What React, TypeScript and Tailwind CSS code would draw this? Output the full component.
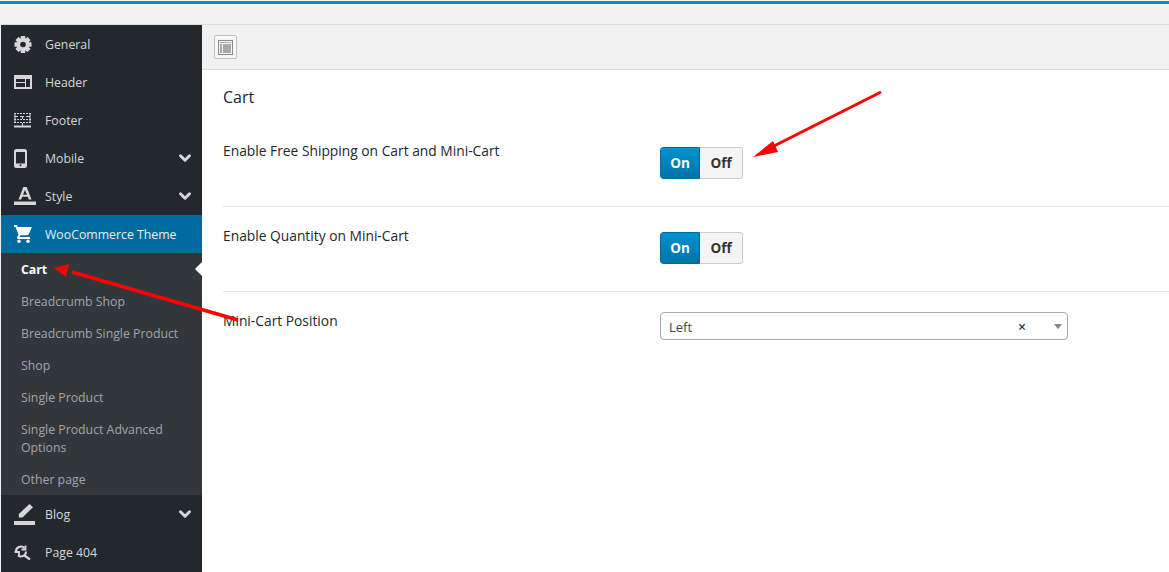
import { ChevronDown } from "lucide-react";

const font = { fontFamily: '"Open Sans", "Noto Sans", sans-serif' };

function Gear() {
  return (
    <svg width="18" height="17" viewBox="0 0 18 17" fill="#d5d7d8">
      <circle cx="9" cy="8.500" r="6.500" />
      {[0, 45, 90, 135].map((a) => (
        <rect key={a} x="6.700" y="0" width="4.600" height="17" rx="0.500" transform={`rotate(${a} 9 8.500)`} />
      ))}
      <circle cx="9" cy="8.500" r="2.800" fill="#23282d" />
    </svg>
  );
}

function HeaderIcon() {
  return (
    <svg width="18" height="14" viewBox="0 0 18 14" fill="#d5d7d8">
      <path fillRule="evenodd" d="M0 0h18v14H0zM2 4v3h9V4zm0 4v4h9V8zm10-4v8h4V4z" />
    </svg>
  );
}

function FooterIcon() {
  return (
    <svg width="17" height="15" viewBox="0 0 17 15" fill="none" stroke="#d5d7d8">
      <path d="M0 .500h17M0 6.500h17M0 9.500h17" strokeDasharray="2 1" />
      <path d="M0 3.500h17" strokeDasharray="4 2" />
      <path d="M1 1v8M8.500 3v3M8.500 10v3M16 1v8" />
      <path d="M0 13.500h17" strokeWidth="2" />
    </svg>
  );
}

function MobileIcon() {
  return (
    <svg width="13" height="19" viewBox="0 0 13 19" fill="#d5d7d8">
      <path fillRule="evenodd" d="M2.500 0h8A2.500 2.500 0 0 1 13 2.500v14a2.500 2.500 0 0 1-2.500 2.500h-8A2.500 2.500 0 0 1 0 16.500v-14A2.500 2.500 0 0 1 2.500 0zM2 3v11.500h9V3zm4.500 12.300a1 1 0 1 0 0 2 1 1 0 0 0 0-2z" />
    </svg>
  );
}

function StyleIcon() {
  return (
    <svg width="22" height="18" viewBox="0 0 22 18" fill="#d5d7d8">
      <path fillRule="evenodd" d="M9.300 0h3.400l4.800 12.500h-2.700l-1-2.700H8.200l-1 2.700H4.500zM11 3 9 7.800h4z" />
      <rect x="0" y="14.500" width="22" height="3.500" />
    </svg>
  );
}

function CartIcon() {
  return (
    <svg width="18" height="18" viewBox="0 0 18 18" fill="#fff">
      <path d="M0 0h3l.9 2H18l-3.300 7.200c-.3.6-.9 1-1.600 1H6.500l-.9 1.500v.3h10.400v2H4.500c-1.100 0-1.800-1.200-1.300-2.100l1.300-2.300L1.500 2H0z" />
      <circle cx="5" cy="16.300" r="1.700" />
      <circle cx="14" cy="16.300" r="1.700" />
    </svg>
  );
}

function BlogIcon() {
  return (
    <svg width="21" height="21" viewBox="0 0 21 21" fill="#d5d7d8">
      <path d="M15.500 0 19 3.200 8.500 13.500H4.800v-3.600z" />
      <rect x="0" y="17" width="21" height="4" />
    </svg>
  );
}

function PageIcon() {
  return (
    <svg width="17" height="15" viewBox="0 0 17 15" fill="none" stroke="#d5d7d8" strokeWidth="2">
      <path d="M2 7a5 5 0 0 1 8.500-4" />
      <path d="M12 6.500a5 5 0 0 1-8 4" />
      <path d="M10.500 10.500l5.500 4" strokeWidth="2.200" />
      <path d="M11.500 .500v4H7.500" strokeWidth="1.800" />
      <path d="M.500 7h4.500v4" strokeWidth="1.800" />
    </svg>
  );
}

function MenuRow({
  icon,
  label,
  chevron,
  active,
}: {
  icon: React.ReactNode;
  label: string;
  chevron?: boolean;
  active?: boolean;
}) {
  return (
    <div className={`flex h-[38px] items-center ${active ? "bg-[#006ba0] text-[#e6eef3]" : "text-[#d5d7d8]"}`}>
      <div className="flex w-[44px] pl-[13px]">{icon}</div>
      <span className="flex-1 pt-[3px] text-[12.3px]">{label}</span>
      {chevron && <ChevronDown size={18} strokeWidth={4} className="mr-[8px] text-[#d5d7d8]" />}
    </div>
  );
}

function SubItem({ label, active }: { label: string; active?: boolean }) {
  return (
    <div className={`relative pb-[6px] pl-[20px] pr-[20px] pt-[8px] text-[12.3px] leading-[18px] ${active ? "font-bold text-white" : "text-[#a0a5a9]"}`}>
      {label}
      {active && (
        <span className="absolute right-0 top-[9px] h-0 w-0 border-y-[7px] border-r-[7px] border-y-transparent border-r-white" />
      )}
    </div>
  );
}

function Toggle() {
  return (
    <div className="flex h-[32px] w-[83px] overflow-hidden rounded-[3px] text-[13.500px] font-bold leading-none">
      <div className="flex w-[40px] items-center justify-center rounded-l-[3px] border border-[#006a9e] bg-gradient-to-b from-[#0091cd] to-[#0073aa] pt-[2px] text-white">
        On
      </div>
      <div className="flex flex-1 items-center justify-center rounded-r-[3px] border border-l-0 border-[#cccccc] bg-[#f5f5f5] pt-[2px] text-[#333333]">
        Off
      </div>
    </div>
  );
}

function Arrows() {
  return (
    <svg className="pointer-events-none absolute left-0 top-0" width="1169" height="572" viewBox="0 0 1169 572">
      <line x1="881" y1="92" x2="770" y2="148" stroke="#ff0000" strokeWidth="3" />
      <polygon points="753,157 773,141 778,152" fill="#ff0000" />
      <line x1="238" y1="320" x2="72" y2="272" stroke="#ff0000" strokeWidth="3.500" />
      <polygon points="54,268 69,264 66,277" fill="#ff0000" />
    </svg>
  );
}

export default function App() {
  return (
    <div className="relative h-[572px] w-[1169px] overflow-hidden bg-white" style={font}>
      <div className="h-[1px] bg-[#f1f1f1]" />
      <div className="h-[3px] bg-[#0091cd]" />
      <div className="h-[1px] bg-white" />
      <div className="h-[20px] border-b border-[#dddddd] bg-[#f1f1f1]" />
      <div className="flex h-[547px]">
        <div className="w-[1px] bg-[#f1f1f1]" />
        <div className="w-[201px] bg-[#23282d]">
          <MenuRow icon={<Gear />} label="General" />
          <MenuRow icon={<HeaderIcon />} label="Header" />
          <MenuRow icon={<FooterIcon />} label="Footer" />
          <MenuRow icon={<MobileIcon />} label="Mobile" chevron />
          <MenuRow icon={<StyleIcon />} label="Style" chevron />
          <MenuRow icon={<CartIcon />} label="WooCommerce Theme" active />
          <div className="bg-[#32373c]">
            <SubItem label="Cart" active />
            <SubItem label="Breadcrumb Shop" />
            <SubItem label="Breadcrumb Single Product" />
            <SubItem label="Shop" />
            <SubItem label="Single Product" />
            <SubItem label="Single Product Advanced Options" />
            <SubItem label="Other page" />
          </div>
          <MenuRow icon={<BlogIcon />} label="Blog" chevron />
          <MenuRow icon={<PageIcon />} label="Page 404" />
        </div>
        <div className="flex-1">
          <div className="flex h-[45px] items-center border-b border-[#dddddd] bg-[#f1f1f1] pl-[12px]">
            <div className="flex h-[24px] w-[23px] items-center justify-center rounded-[2px] border border-[#c0c0c0] bg-[#f7f7f7]">
              <div className="flex h-[15px] w-[15px] flex-col gap-[1px] border border-[#8a8a8a] p-[1px]">
                <div className="h-[1px] bg-[#a8a8a8]" />
                <div className="flex flex-1 gap-[1px]">
                  <div className="w-[2px] bg-[#a8a8a8]" />
                  <div className="flex-1 bg-[#a8a8a8]" />
                </div>
              </div>
            </div>
          </div>
          <div className="pl-[21px]">
            <h2 className="pt-[16px] text-[16px] font-normal leading-[22px] text-[#23282d]">Cart</h2>
            <div className="mt-[13px] grid grid-cols-[437px_1fr] border-b border-[#e5e5e5] pb-[27px] pt-[26px]">
              <span className="mt-[-5px] text-[13.800px] leading-[18px] text-[#23282d]">Enable Free Shipping on Cart and Mini-Cart</span>
              <Toggle />
            </div>
            <div className="grid grid-cols-[437px_1fr] border-b border-[#e5e5e5] pb-[27px] pt-[25px]">
              <span className="mt-[-5px] text-[13.800px] leading-[18px] text-[#23282d]">Enable Quantity on Mini-Cart</span>
              <Toggle />
            </div>
            <div className="grid grid-cols-[437px_1fr] pt-[20px]">
              <span className="text-[13.800px] leading-[18px] text-[#23282d]">Mini-Cart Position</span>
              <div className="flex h-[28px] w-[408px] items-center rounded-[4px] border border-[#aaaaaa] bg-white pl-[8px] pr-[5px] text-[13px] text-[#444444]">
                <span className="flex-1 pt-[3px]">Left</span>
                <span className="mr-[28px] pt-[2px] text-[14px] font-semibold leading-none text-[#333333]">×</span>
                <span className="h-0 w-0 border-x-[4px] border-t-[5px] border-x-transparent border-t-[#888888]" />
              </div>
            </div>
          </div>
        </div>
      </div>
      <Arrows />
    </div>
  );
}
